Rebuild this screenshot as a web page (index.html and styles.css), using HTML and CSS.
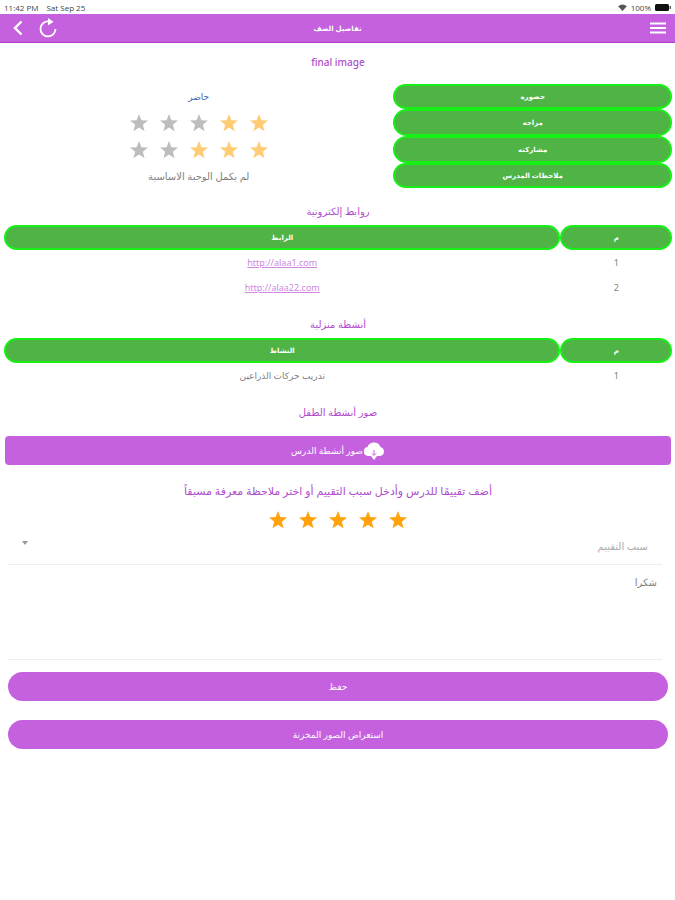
FILE: index.html
```html
<!DOCTYPE html>
<html lang="ar" dir="rtl">
<head>
  <meta charset="UTF-8">
  <meta name="viewport" content="width=device-width, initial-scale=1">
  <title>تفاصيل الصف</title>
  <link rel="stylesheet" href="styles.css">
</head>
<body>
  <svg width="0" height="0" class="sprite">
    <symbol id="star" viewBox="0 0 20 20"><path d="M10 0l2.700 6.900 7.300.4-5.700 4.600 1.900 7.200L10 15.100l-6.200 4 1.900-7.200L0 7.300l7.300-.4z"/></symbol>
  </svg>

  <div class="status" dir="ltr">
    <span>11:42 PM</span>
    <span class="date">Sat Sep 25</span>
    <svg class="wifi" viewBox="0 0 10 8"><path d="M0 2.500Q5-1.500 10 2.500L5 8z"/></svg>
    <span>100%</span>
    <svg class="battery" viewBox="0 0 16 7"><rect width="14" height="7" rx="1.500"/><rect x="14.700" y="2" width="1" height="3"/></svg>
  </div>

  <header class="topbar">
    <button class="icon-btn" aria-label="القائمة">
      <svg width="16" height="12" viewBox="0 0 16 12"><path d="M0 1.500h16M0 6h16M0 10.500h16" stroke-width="2"/></svg>
    </button>
    <h1>تفاصيل الصف</h1>
    <div class="nav">
      <button class="icon-btn" aria-label="تحديث">
        <svg width="18" height="20" viewBox="0 0 18 20"><path d="M10 3.500A7.500 7.500 0 1 0 16.500 11" stroke-width="1.800"/><path class="solid" d="M9 0l5.500 3.700L9 7.400z"/></svg>
      </button>
      <button class="icon-btn" aria-label="رجوع">
        <svg width="10" height="16" viewBox="0 0 10 16"><path d="M8.500 1.500L2 8l6.500 6.500" stroke-width="2.400"/></svg>
      </button>
    </div>
  </header>

  <main>
    <h2>final image</h2>
    <table class="details">
      <tr><th>حضوره</th><td class="present">حاضر</td></tr>
      <tr class="rated"><th>مزاجه</th><td>
        <div class="stars" role="img" aria-label="2 / 5">
          <svg class="on"><use href="#star"/></svg><svg class="on"><use href="#star"/></svg><svg><use href="#star"/></svg><svg><use href="#star"/></svg><svg><use href="#star"/></svg>
        </div>
      </td></tr>
      <tr class="rated"><th>مشاركته</th><td>
        <div class="stars" role="img" aria-label="3 / 5">
          <svg class="on"><use href="#star"/></svg><svg class="on"><use href="#star"/></svg><svg class="on"><use href="#star"/></svg><svg><use href="#star"/></svg><svg><use href="#star"/></svg>
        </div>
      </td></tr>
      <tr><th>ملاحظات المدرس</th><td class="note">لم يكمل الوجبة الاساسية</td></tr>
    </table>

    <h2>روابط إلكترونية</h2>
    <table class="list">
      <thead><tr><th>م</th><th>الرابط</th></tr></thead>
      <tbody>
        <tr><td>1</td><td><a href="http://alaa1.com">http://alaa1.com</a></td></tr>
        <tr><td>2</td><td><a href="http://alaa22.com">http://alaa22.com</a></td></tr>
      </tbody>
    </table>

    <h2>أنشطة منزلية</h2>
    <table class="list">
      <thead><tr><th>م</th><th>النشاط</th></tr></thead>
      <tbody>
        <tr><td>1</td><td>تدريب حركات الذراعين</td></tr>
      </tbody>
    </table>

    <h2>صور أنشطة الطفل</h2>
    <button class="btn download">
      <svg width="22" height="18" viewBox="0 0 22 18"><path fill="#fff" d="M5 14a4.500 4.500 0 0 1-.6-8.900A7 7 0 0 1 17.500 5 4.600 4.600 0 0 1 17 14h-3l-3 4-3-4z"/><path fill="none" stroke="#c561df" d="M11 8v5M9 11.500l2 2 2-2"/></svg>
      <span>صور أنشطة الدرس</span>
    </button>

    <form>
      <h2 class="prompt">أضف تقييمًا للدرس وأدخل سبب التقييم أو اختر ملاحظة معرفة مسبقاً</h2>
      <div class="rating">
        <input type="radio" name="rate" value="1" aria-label="1">
        <input type="radio" name="rate" value="2" aria-label="2">
        <input type="radio" name="rate" value="3" aria-label="3">
        <input type="radio" name="rate" value="4" aria-label="4">
        <input type="radio" name="rate" value="5" aria-label="5" checked>
      </div>
      <div class="select">
        <select aria-label="سبب التقييم"><option>سبب التقييم</option></select>
        <svg width="6" height="4" viewBox="0 0 6 4"><path d="M0 0h6L3 4z"/></svg>
      </div>
      <textarea aria-label="ملاحظات">شكرا</textarea>
      <button type="submit" class="btn round">حفظ</button>
      <button type="button" class="btn round">استعراض الصور المخزنة</button>
    </form>
  </main>
</body>
</html>
```

FILE: styles.css
```css
* {
  box-sizing: border-box;
}
body {
  margin: 0;
  background: #fff;
  color: #808080;
  font-family: "Noto Sans", "DejaVu Sans", sans-serif;
  font-size: 9px;
}
button, select, textarea {
  font-family: inherit;
  border: none;
}
button {
  cursor: pointer;
}
.sprite {
  display: block;
}
.status {
  display: flex;
  align-items: center;
  height: 14px;
  padding: 0 4px;
  gap: 4px;
  color: #444;
  font: 8px "Open Sans", sans-serif;
}
.date {
  margin-left: 4px;
  margin-right: auto;
}
.wifi {
  width: 9px;
  height: 7px;
  fill: #555;
}
.battery {
  width: 16px;
  height: 7px;
  fill: #111;
}
.topbar {
  display: grid;
  grid-template-columns: 1fr auto 1fr;
  align-items: center;
  height: 29px;
  padding: 0 9px;
  background: #c561df;
  border-bottom: 1px solid #b03ccb;
}
.topbar h1 {
  margin: 0;
  color: #fff;
  font-size: 7px;
}
.icon-btn {
  display: flex;
  justify-self: start;
  padding: 0;
  background: none;
}
.icon-btn path {
  fill: none;
  stroke: #fff;
}
.icon-btn .solid {
  fill: #fff;
  stroke: none;
}
.nav {
  display: flex;
  align-items: center;
  justify-content: flex-end;
  gap: 16px;
  padding-left: 4px;
}
main {
  padding: 9px 3px 0 4px;
}
h2 {
  margin: 0;
  color: #b04ccc;
  font-size: 10px;
  font-weight: 500;
  line-height: 20px;
  text-align: center;
}
table {
  width: 100%;
  table-layout: fixed;
  border-spacing: 0;
  margin-bottom: 14px;
}
th, td {
  height: 25px;
  padding: 0;
  text-align: center;
  line-height: 16px;
}
th {
  background: #4fb346;
  border: 2px solid #16f016;
  border-radius: 14px;
  color: #fff;
  font-size: 7px;
}
.details {
  margin-top: 12px;
  margin-bottom: 13px;
}
.details th {
  width: 41.7%;
}
.rated th {
  height: 27px;
}
.present {
  color: #4463ad;
}
.note {
  font-size: 10px;
}
.stars, .rating {
  display: flex;
  justify-content: center;
  gap: 12px;
}
.stars svg {
  width: 18px;
  height: 18px;
  fill: #bdbdbd;
}
.stars .on {
  fill: #ffcc75;
}
.list {
  margin-top: 4px;
}
.list th:first-child {
  width: 16.7%;
}
.list a {
  color: #cf87df;
}
.btn {
  display: flex;
  align-items: center;
  justify-content: center;
  width: 100%;
  height: 29px;
  background: #c561df;
  color: #fff;
  font-size: 9px;
}
.download {
  width: calc(100% - 2px);
  margin: 14px 1px 16px;
  border-radius: 4px;
}
.prompt {
  font-size: 11px;
}
.rating {
  margin-top: 10px;
}
.rating input {
  appearance: none;
  width: 18px;
  height: 18px;
  margin: 0;
  background: #ffa20d;
  clip-path: polygon(50% 0, 63% 34%, 100% 36%, 71% 60%, 81% 96%, 50% 76%, 19% 96%, 29% 60%, 0 36%, 37% 34%);
}
form {
  padding: 0 4px;
}
.select {
  position: relative;
  height: 36px;
  margin-right: 6px;
  border-bottom: 1px solid #eee;
}
.select select {
  appearance: none;
  width: 100%;
  height: 34px;
  padding: 0 14px;
  background: none;
  color: #aaa;
  font-size: 10px;
}
.select svg {
  position: absolute;
  left: 14px;
  top: 12px;
  fill: #999;
}
textarea {
  display: block;
  width: calc(100% - 6px);
  height: 95px;
  margin: 0 6px 12px 0;
  padding: 10px 5px;
  border-bottom: 1px solid #eee;
  resize: none;
  color: #808080;
  font-size: 10px;
}
.round {
  margin-bottom: 19px;
  border-radius: 15px;
}
```
